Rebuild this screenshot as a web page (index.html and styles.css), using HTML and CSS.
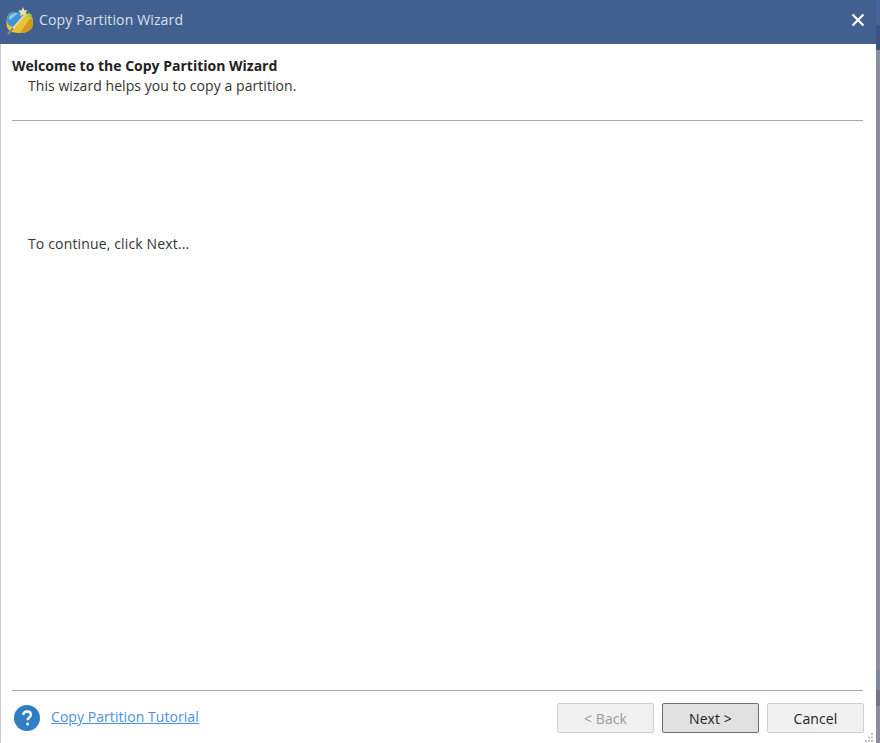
FILE: index.html
```html
<!DOCTYPE html>
<html lang="en">
<head>
<meta charset="utf-8">
<title>Copy Partition Wizard</title>
<link rel="stylesheet" href="styles.css">
</head>
<body>
<div class="window">
  <header class="titlebar">
    <svg class="app-icon" width="28" height="28" viewBox="0 0 28 28" aria-hidden="true">
      <path d="M1 11c1-4 4-6 8-6h10l7 5c1 1 1 10 0 11-2 3-7 5-12 5-5 0-10-1-12-4-2-3-2-8-1-11z" fill="#e8c433"/>
      <path d="M14 26c5 0 10-2 12-5 1-1 1-7 .5-10l-3 1-9.500 14z" fill="#cf9a1d"/>
      <path d="M1 13c0-5 4-8 9-8 3 0 6 0 8 2L7 20c-4-1-6-3-6-7z" fill="#3f94d6"/>
      <path d="M3 10c2-3 5-4 9-4l-8 7c-1-1-1.500-2-1-3z" fill="#8ccbf0"/>
      <path d="M2 27L18 9" stroke="#dcd8c6" stroke-width="1.700"/>
      <path d="M2 27l5-5.600" stroke="#7b7f77" stroke-width="1.700"/>
      <path d="M17 0l1.300 3.200 3.400.4-2.500 2.300.7 3.400-2.900-1.700-3 1.700.7-3.400-2.500-2.300 3.400-.4z" fill="#ece3a0"/>
      <path d="M23 5l1 2.300 2.500.3-1.800 1.700.5 2.500-2.200-1.200-2.200 1.200.5-2.500-1.800-1.700 2.500-.3z" fill="#a6c95c"/>
    </svg>
    <span class="title">Copy Partition Wizard</span>
    <svg class="close" width="14" height="14" viewBox="0 0 14 14" aria-hidden="true">
      <path d="M1.500 1.500l11 11M12.500 1.500l-11 11" stroke="#fff" stroke-width="2.200" fill="none"/>
    </svg>
  </header>
  <main class="body">
    <section class="intro">
      <h1 class="heading">Welcome to the Copy Partition Wizard</h1>
      <p class="subheading">This wizard helps you to copy a partition.</p>
    </section>
    <div class="content">
      <p class="hint">To continue, click Next...</p>
    </div>
    <footer class="footer">
      <a class="tutorial" href="#">
        <svg class="help" width="26" height="26" viewBox="0 0 26 26" aria-hidden="true">
          <circle cx="13" cy="13" r="13" fill="#2f7fc4"/>
          <path d="M9.200 10c.2-2.300 1.800-3.500 3.900-3.500 2.200 0 3.800 1.300 3.800 3.200 0 2.800-3.300 2.800-3.300 5.600" fill="none" stroke="#fff" stroke-width="2.300"/>
          <circle cx="13.600" cy="19" r="1.500" fill="#fff"/>
        </svg>
        <span class="tutorial-text">Copy Partition Tutorial</span>
      </a>
      <div class="buttons">
        <button class="btn" disabled>&lt; Back</button>
        <button class="btn btn-focus">Next &gt;</button>
        <button class="btn">Cancel</button>
      </div>
    </footer>
    <svg class="grip" width="8" height="10" viewBox="0 0 8 10" aria-hidden="true">
      <path d="M6 0h2v2H6zM3 3.500h2v2H3zM6 3.500h2v2H6zM0 7h2v2H0zM3 7h2v2H3zM6 7h2v2H6z" fill="#c4c4c4"/>
    </svg>
  </main>
</div>
</body>
</html>
```
FILE: styles.css
```css
html, body { margin: 0; height: 100%; }
body {
  width: 880px;
  height: 743px;
  overflow: hidden;
  background: linear-gradient(to bottom,
    #46659a 0, #46659a 25px, #3a5383 25px, #3a5383 50px,
    #8c8c9c 50px, #8c8c9c 670px, #7f86a0 670px, #7f86a0 690px,
    #77777f 690px, #77777f 706px, #8c8c9c 706px);
  font-family: "Open Sans", "Noto Sans", "Liberation Sans", sans-serif;
  font-size: 14px;
  color: #222;
}
.window {
  width: 876px;
  height: 743px;
  display: flex;
  flex-direction: column;
  background: #fff;
  border-left: 1px solid #c9c9dc;
  border-right: 1px solid #fafafa;
  box-sizing: border-box;
}
.titlebar {
  height: 44px;
  flex: none;
  box-sizing: border-box;
  display: flex;
  align-items: center;
  background: #41608f;
  margin: 0 -1px 0 -1px;
  padding: 0 11px 5px 6px;
  color: #d8e0ec;
}
.app-icon { flex: none; margin-top: 3px; }
.title { margin-left: 5px; font-size: 14px; flex: 1; letter-spacing: 0.14px; }
.close { flex: none; }
.body {
  position: relative;
  flex: 1;
  display: flex;
  flex-direction: column;
  padding: 0 12px 0 11px;
  min-height: 0;
}
.intro {
  height: 77px;
  box-sizing: border-box;
  padding-top: 12px;
  border-bottom: 1px solid #a8a8a8;
  flex: none;
}
.heading { margin: 0; font-size: 14px; line-height: 20px; font-weight: 700; color: #222; letter-spacing: 0; }
.subheading { margin: 0 0 0 16px; font-size: 14px; line-height: 20px; color: #333; letter-spacing: 0.06px; }
.content { flex: 1; padding: 113px 0 0 16px; }
.hint { margin: 0; line-height: 20px; color: #333; letter-spacing: 0.15px; }
.footer {
  height: 52px;
  flex: none;
  border-top: 1px solid #a8a8a8;
  display: flex;
  align-items: flex-start;
  justify-content: space-between;
}
.tutorial {
  display: flex;
  align-items: center;
  margin: 14px 0 0 2px;
  text-decoration: none;
  color: #4a90e2;
}
.help { flex: none; }
.tutorial-text { margin-left: 11px; text-decoration: underline; margin-top: -4px; letter-spacing: 0.06px; }
.buttons { display: flex; gap: 8px; margin: 12px -1px 0 0; }
.btn {
  width: 97px;
  height: 30px;
  padding: 0;
  box-sizing: border-box;
  font: inherit;
  color: #222;
  background: #f0f0f0;
  border: 1px solid #cfcfcf;
  border-radius: 2px;
  letter-spacing: 0.1px;
}
.btn:disabled { color: #9a9a9a; }
.btn-focus { background: #e1e1e1; border-color: #6f6f6f; }
.grip { position: absolute; right: 2px; bottom: 0; }
```
